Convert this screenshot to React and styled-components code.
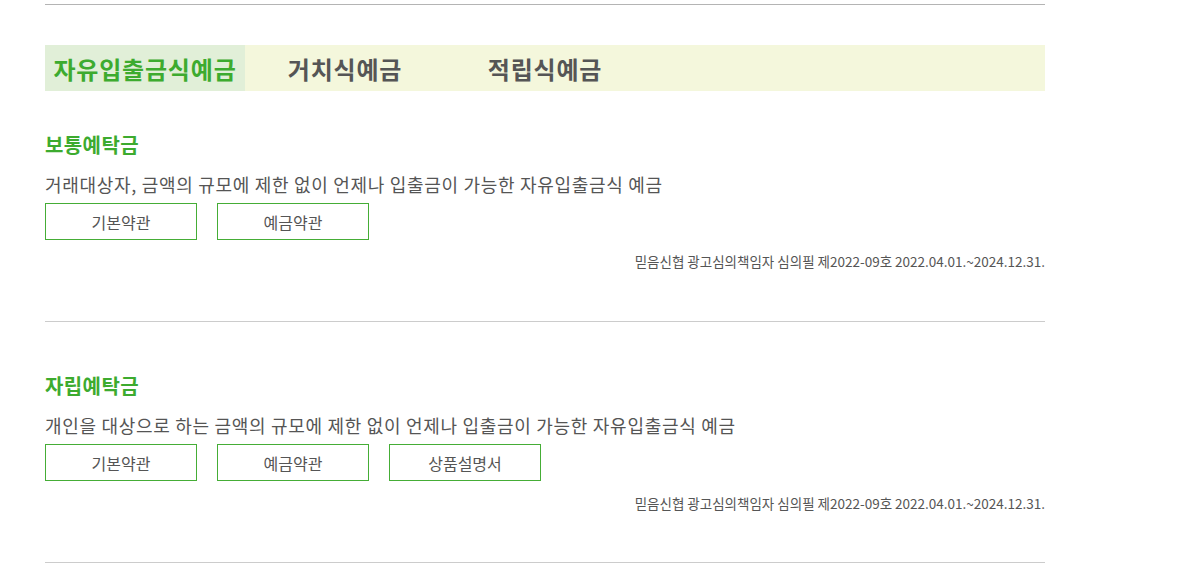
import React, { useState } from "react";
import styled, { createGlobalStyle } from "styled-components";

const GlobalStyle = createGlobalStyle`
  html, body {
    margin: 0;
    padding: 0;
    background: #ffffff;
  }
  body {
    font-family: "Noto Sans CJK KR", "Noto Sans", sans-serif;
    color: #555555;
  }
  * { box-sizing: border-box; }
`;

const Page = styled.div`
  width: 1000px;
  margin-left: 45px;
  padding-top: 4px;
`;

const TopRule = styled.hr`
  margin: 0;
  border: 0;
  border-top: 1px solid #b4b4b4;
`;

const TabBar = styled.ul`
  list-style: none;
  margin: 40px 0 0;
  padding: 0;
  display: flex;
  height: 46px;
  background: #f4f7dc;
`;

const Tab = styled.li`
  width: 200px;
  display: flex;
  align-items: center;
  justify-content: center;
  font-size: 24px;
  font-weight: 700;
  letter-spacing: 0.8px;
  color: ${(p) => (p.$active ? "#3dab2f" : "#555555")};
  background: ${(p) => (p.$active ? "#e1efd8" : "transparent")};
  cursor: pointer;
`;

const Section = styled.section`
  padding: ${(p) => p.$top}px 0 ${(p) => p.$bottom}px;
  border-bottom: 1px solid #cccccc;
`;

const Title = styled.h3`
  margin: 0;
  font-size: 20px;
  line-height: 28px;
  font-weight: 700;
  color: #3dab2f;
  letter-spacing: 0.4px;
`;

const Desc = styled.p`
  margin: 12px 0 0;
  font-size: 18px;
  line-height: 26px;
  color: #555555;
  letter-spacing: 0.7px;
`;

const ButtonRow = styled.div`
  display: flex;
  gap: 20px;
  margin-top: 6px;
`;

const DocButton = styled.button`
  width: 152px;
  height: 37px;
  border: 1px solid #45ad36;
  background: #ffffff;
  color: #555555;
  font-family: inherit;
  font-size: 16px;
  letter-spacing: 0;
  padding: 0;
  cursor: pointer;
`;

const Notice = styled.p`
  margin: ${(p) => p.$gap}px 0 0;
  text-align: right;
  font-size: 13.5px;
  line-height: 20px;
  color: #555555;
  letter-spacing: 0;
`;

const tabs = ["자유입출금식예금", "거치식예금", "적립식예금"];

const products = [
  {
    title: "보통예탁금",
    desc: "거래대상자, 금액의 규모에 제한 없이 언제나 입출금이 가능한 자유입출금식 예금",
    docs: ["기본약관", "예금약관"],
    top: 40,
    gap: 11,
    bottom: 50,
  },
  {
    title: "자립예탁금",
    desc: "개인을 대상으로 하는 금액의 규모에 제한 없이 언제나 입출금이 가능한 자유입출금식 예금",
    docs: ["기본약관", "예금약관", "상품설명서"],
    top: 50,
    gap: 12,
    bottom: 49,
  },
];

const NOTICE = "믿음신협 광고심의책임자 심의필 제2022-09호 2022.04.01.~2024.12.31.";

export default function App() {
  const [active, setActive] = useState(0);
  return (
    <>
      <GlobalStyle />
      <Page>
        <TopRule />
        <TabBar>
          {tabs.map((t, i) => (
            <Tab key={t} $active={i === active} onClick={() => setActive(i)}>
              {t}
            </Tab>
          ))}
        </TabBar>
        {products.map((p) => (
          <Section key={p.title} $top={p.top} $bottom={p.bottom}>
            <Title>{p.title}</Title>
            <Desc>{p.desc}</Desc>
            <ButtonRow>
              {p.docs.map((d) => (
                <DocButton key={d}>{d}</DocButton>
              ))}
            </ButtonRow>
            <Notice $gap={p.gap}>{NOTICE}</Notice>
          </Section>
        ))}
      </Page>
    </>
  );
}
